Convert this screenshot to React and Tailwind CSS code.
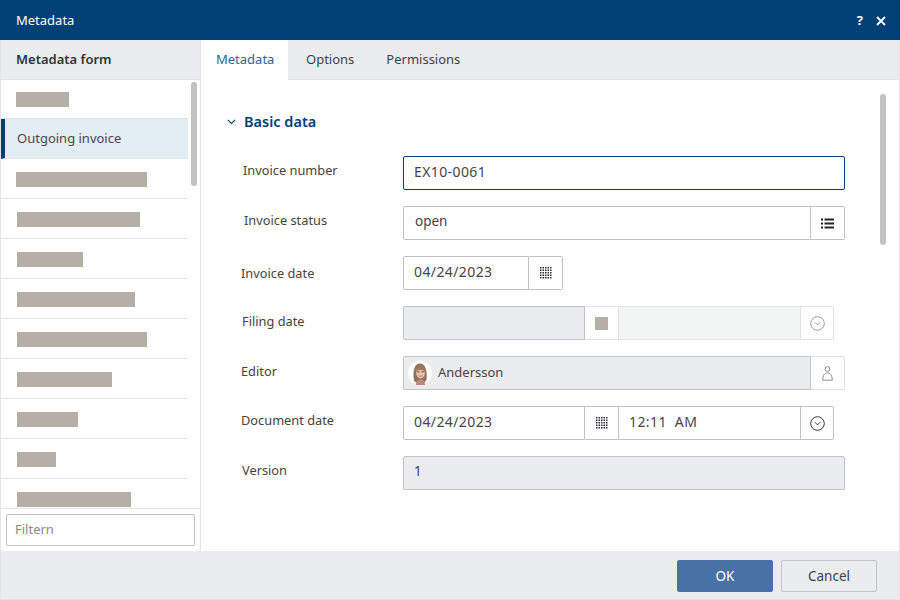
const font = "font-['Noto_Sans','Liberation_Sans',sans-serif]";

const GridIcon = ({ muted }) => (
  <svg width="12" height="12" viewBox="0 0 12 12" fill={muted ? "#b5afa8" : "#2b2f33"}>
    {[0, 2.5, 5, 7.5, 10].map((y) =>
      [0, 2.5, 5, 7.5, 10].map((x) => <rect key={`${x}-${y}`} x={x} y={y} width="1.5" height="1.5" />)
    )}
  </svg>
);

const ClockChevron = ({ color }) => (
  <svg width="15" height="15" viewBox="0 0 15 15" fill="none" stroke={color} strokeWidth="1">
    <circle cx="7.5" cy="7.5" r="6.8" />
    <path d="M4.8 6.2 7.5 8.9 10.2 6.2" />
  </svg>
);

const ListIcon = () => (
  <svg width="13" height="11" viewBox="0 0 13 11" fill="#23272b">
    <rect x="0" y="0.5" width="2" height="2" />
    <rect x="3.5" y="0.5" width="9.5" height="2" />
    <rect x="0" y="4.5" width="2" height="2" />
    <rect x="3.5" y="4.5" width="9.5" height="2" />
    <rect x="0" y="8.5" width="2" height="2" />
    <rect x="3.5" y="8.5" width="9.5" height="2" />
  </svg>
);

const PersonIcon = () => (
  <svg width="11" height="15" viewBox="0 0 11 15" fill="none" stroke="#8a8f94" strokeWidth="1">
    <circle cx="5.5" cy="3" r="2.4" />
    <path d="M.7 14.2C.7 9.5 2.6 7 5.5 7s4.8 2.5 4.8 7.2Z" />
  </svg>
);

const Avatar = () => (
  <svg width="24" height="24" viewBox="0 0 24 24" className="shrink-0">
    <circle cx="12" cy="12" r="12" fill="#ffffff" />
    <path d="M6 19C4.500 10 6.500 2.500 12 2.500S19.500 10 18.500 19c-1 2-3 3-6.500 3s-5.500-1-6.500-3Z" fill="#93715a" />
    <ellipse cx="12.500" cy="11.500" rx="4.400" ry="6" fill="#ecc4aa" />
    <path d="M8 10C8.500 6 10.500 4.800 12.500 4.800S16.500 6 17 10C14.500 8.500 10.500 8.500 8 10Z" fill="#9a785e" />
    <path d="M8.500 10.800h3.200M13.300 10.800h3.200" stroke="#5a4638" strokeWidth="0.900" />
    <path d="M10.500 14.700c1.200.7 2.800.7 4 0" stroke="#bd6a62" strokeWidth="0.900" fill="none" />
    <path d="M8 24c0-4 1.800-5.500 4.500-5.500S17 20 17 24Z" fill="#b98b78" />
  </svg>
);

const bars = [
  { w: "w-[131px]", ml: "ml-[15px]" },
  { w: "w-[123px]", ml: "ml-[16px]" },
  { w: "w-[66px]", ml: "ml-[16px]" },
  { w: "w-[118px]", ml: "ml-[16px]" },
  { w: "w-[130px]", ml: "ml-[16px]" },
  { w: "w-[95px]", ml: "ml-[16px]" },
  { w: "w-[61px]", ml: "ml-[16px]" },
  { w: "w-[39px]", ml: "ml-[16px]" },
  { w: "w-[114px]", ml: "ml-[16px]" },
];

const Row = ({ label, labelClass, children }) => (
  <div className="flex h-[34px] items-start">
    <div className={`w-[162px] shrink-0 text-[12.800px] leading-[18px] text-[#4a3f3a] ${labelClass}`}>{label}</div>
    {children}
  </div>
);

const Box = ({ className = "", border = "border-[#c2c3c5]", children }) => (
  <div className={`flex h-[34px] items-center border text-[#4a4346] ${border} ${className}`}>{children}</div>
);

const numText = "pb-[3px] text-[14px] tracking-[0.4px]";
const soft = "border-[#e0e1e3]";

export default function App() {
  return (
    <div className={`${font} flex h-[600px] w-[900px] flex-col overflow-hidden bg-white`}>
      <header className="flex h-10 shrink-0 items-center justify-between bg-[#004077] pl-4 pr-[14px] pt-px text-[13px] text-white">
        <span>Metadata</span>
        <div className="flex items-center gap-[13px]">
          <span className="text-[13px] font-bold leading-none">?</span>
          <svg width="10" height="10" viewBox="0 0 10 10" stroke="#ffffff" strokeWidth="1.800">
            <path d="M1 1l8 8M9 1l-8 8" />
          </svg>
        </div>
      </header>

      <div className="flex min-h-0 flex-1 border-x border-[#e3e4e6]">
        <aside className="relative flex w-[200px] shrink-0 flex-col border-r border-[#e3e4e6]">
          <div className="flex h-10 shrink-0 items-center border-b border-[#e3e4e6] bg-[#ebecee] pl-[15px] text-[13px] font-semibold text-[#2f3337]">
            Metadata form
          </div>
          <div className="h-[428px] shrink-0 overflow-hidden pr-3">
            <div className="flex h-[39px] items-start border-b border-[#e3e4e6] pt-3">
              <div className="ml-[15px] h-[15px] w-[53px] bg-[#b5afa8]" />
            </div>
            <div className="flex h-10 items-center border-b border-l-4 border-[#e3e4e6] border-l-[#004077] bg-[#e3edf4] pl-3 text-[13px] text-[#4f464c]">
              Outgoing invoice
            </div>
            {bars.map((b, i) => (
              <div key={i} className="flex h-10 items-start border-b border-[#e3e4e6] pt-[13px]">
                <div className={`h-[15px] bg-[#b5afa8] ${b.w} ${b.ml}`} />
              </div>
            ))}
          </div>
          <div className="flex flex-1 items-start border-t border-[#e3e4e6] px-[5px] pt-[5px]">
            <div className="flex h-[32px] w-[189px] items-center rounded-[2px] border border-[#c2c3c5] pl-2 text-[13px] text-[#8a8a8a]">
              Filtern
            </div>
          </div>
          <div className="absolute left-[190px] top-[42px] h-[104px] w-[6px] rounded-[3px] bg-[#c2c2c2]" />
        </aside>

        <main className="relative flex min-w-0 flex-1 flex-col">
          <nav className="flex h-10 shrink-0 border-b border-[#e3e4e6] bg-[#ebecee] text-[13px] text-[#3d4247]">
            <div className="-mb-px flex w-[87px] items-center bg-white pl-[15px] text-[#2f6496]">Metadata</div>
            <div className="ml-[18px] flex items-center">Options</div>
            <div className="ml-[32px] flex items-center">Permissions</div>
          </nav>
          <div className="flex-1 pl-10 pt-[31px]">
            <div className="-ml-[14px] flex h-[22px] items-center gap-2">
              <svg width="9" height="6" viewBox="0 0 9 6" fill="none" stroke="#004077" strokeWidth="1.100">
                <path d="M.8.800 4.500 4.500 8.200.800" />
              </svg>
              <span className="text-[14.500px] font-semibold text-[#004077]">Basic data</span>
            </div>
            <div className="mt-[23px] flex flex-col gap-4">
              <Row label="Invoice number" labelClass="pl-[2px] pt-[5px]">
                <Box border="border-[#004077]" className={`w-[442px] rounded-[2px] pl-[10px] ${numText}`}>EX10-0061</Box>
              </Row>
              <Row label="Invoice status" labelClass="pl-[3px] pt-[5px]">
                <div className="flex w-[442px]">
                  <Box className="flex-1 rounded-l-[2px] pb-[3px] pl-[11px] text-[13.500px]">open</Box>
                  <Box className="w-[34px] justify-center rounded-r-[2px] border-l-0"><ListIcon /></Box>
                </div>
              </Row>
              <Row label="Invoice date" labelClass="pt-[8px]">
                <div className="flex">
                  <Box className={`w-[126px] rounded-l-[2px] pl-[10px] ${numText}`}>04/24/2023</Box>
                  <Box className="w-[34px] justify-center rounded-r-[2px] border-l-0"><GridIcon /></Box>
                </div>
              </Row>
              <Row label="Filing date" labelClass="pl-[1px] pt-[6px]">
                <div className="flex">
                  <Box className="w-[182px] rounded-l-[2px] bg-[#ebecee]" />
                  <Box border={soft} className="w-[34px] justify-center border-l-0">
                    <div className="h-[13px] w-[13px] bg-[#b5afa8]" />
                  </Box>
                  <Box border={soft} className="w-[182px] border-l-0 bg-[#f3f5f5]" />
                  <Box border={soft} className="w-[33px] justify-center rounded-r-[2px] border-l-0">
                    <ClockChevron color="#9a9ea2" />
                  </Box>
                </div>
              </Row>
              <Row label="Editor" labelClass="pt-[6px]">
                <div className="flex w-[442px]">
                  <Box className="flex-1 gap-[6px] rounded-l-[2px] bg-[#ebecee] pl-1 text-[13px]"><Avatar />Andersson</Box>
                  <Box border={soft} className="w-[34px] justify-center rounded-r-[2px] border-l-0"><PersonIcon /></Box>
                </div>
              </Row>
              <Row label="Document date" labelClass="pt-[5px]">
                <div className="flex">
                  <Box className={`w-[182px] rounded-l-[2px] pl-[10px] ${numText}`}>04/24/2023</Box>
                  <Box className="w-[34px] justify-center border-l-0"><GridIcon /></Box>
                  <Box className={`w-[182px] border-l-0 pl-[10px] ${numText}`}>12:11&nbsp; AM</Box>
                  <Box className="w-[33px] justify-center rounded-r-[2px] border-l-0"><ClockChevron color="#33383c" /></Box>
                </div>
              </Row>
              <Row label="Version" labelClass="pl-[1px] pt-[5px]">
                <Box className="w-[442px] rounded-[2px] bg-[#ebecee] pb-[3px] pl-[10px] text-[13.500px] text-[#4a5a6a]">1</Box>
              </Row>
            </div>
          </div>
          <div className="absolute left-[679px] top-[54px] h-[151px] w-[6px] rounded-[3px] bg-[#c2c2c2]" />
        </main>
      </div>

      <footer className="flex h-[49px] shrink-0 items-start justify-end gap-2 border-x border-b border-[#e3e4e6] bg-[#ebecee] pr-[22px] pt-[9px]">
        <button className="h-8 w-[96px] rounded-[2px] bg-[#4872a5] text-[13.500px] text-white">OK</button>
        <button className="h-8 w-[96px] rounded-[2px] border border-[#c2c3c5] text-[13.500px] text-[#3d4247]">Cancel</button>
      </footer>
    </div>
  );
}
